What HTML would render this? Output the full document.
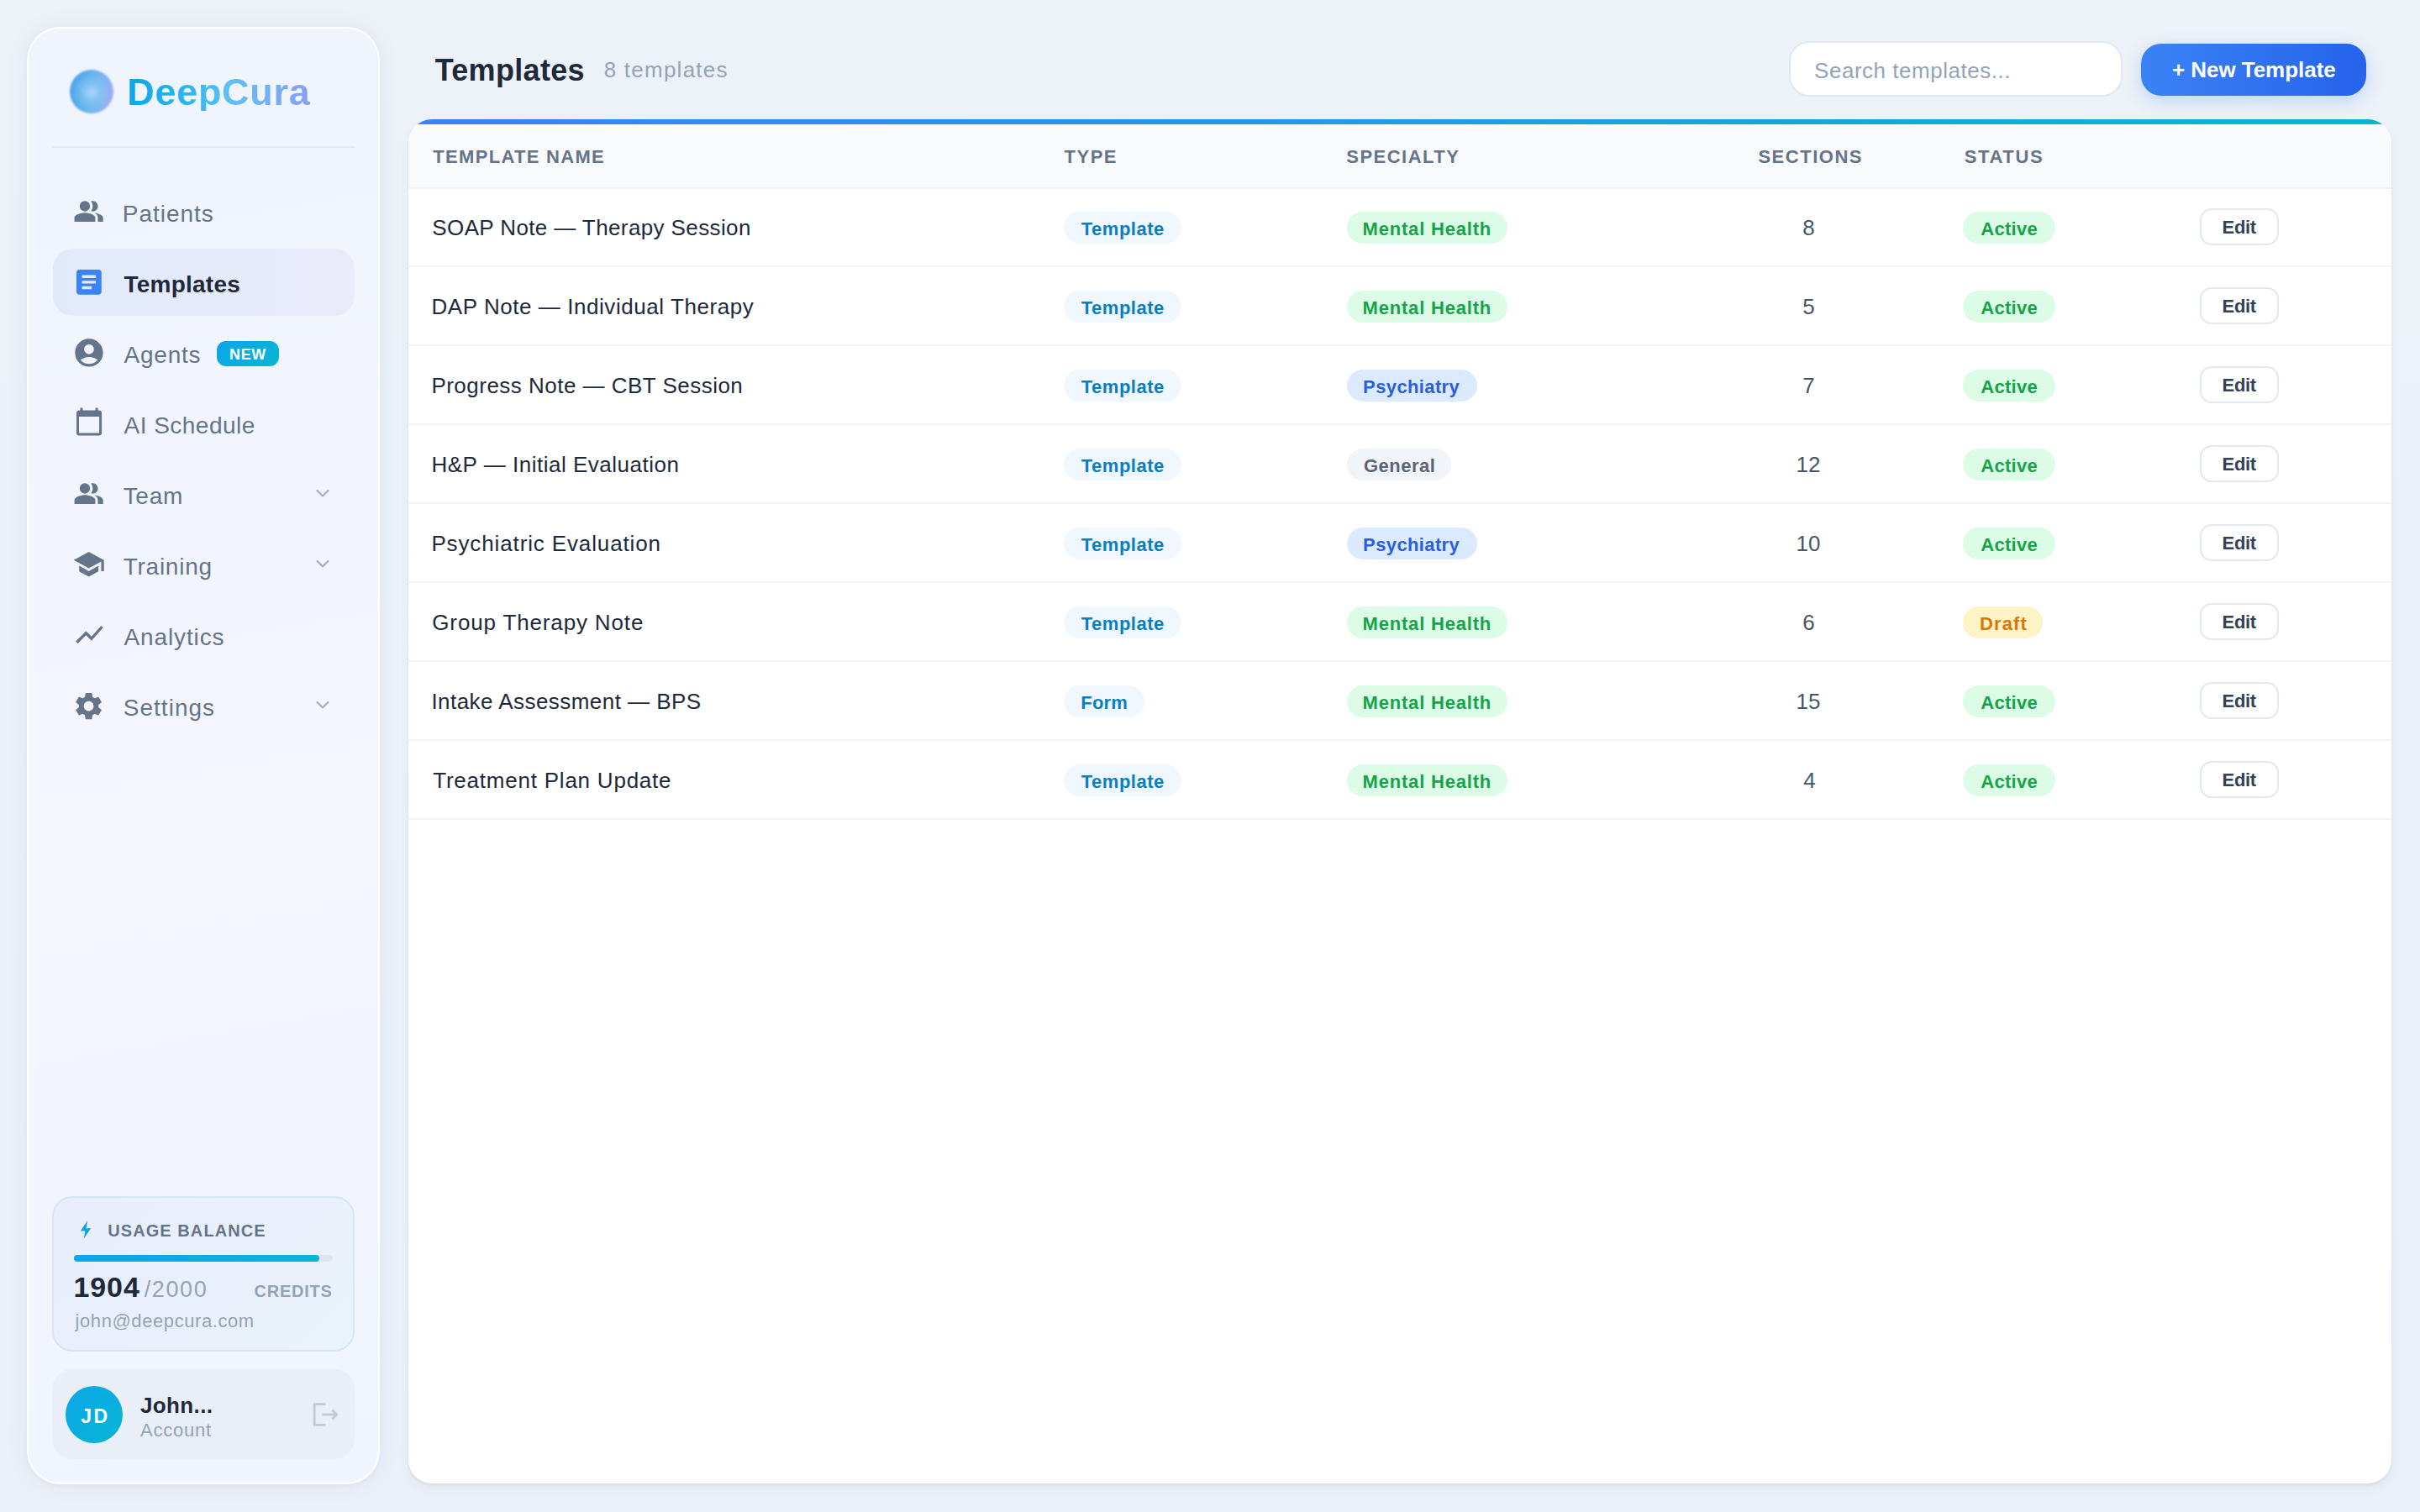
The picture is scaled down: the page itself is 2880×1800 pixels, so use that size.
<!DOCTYPE html>
<html><head><meta charset="utf-8"><title>Templates</title><style>
html,body{margin:0;padding:0}
@media (max-width:1500px){html{zoom:0.5}}
body{width:2880px;height:1800px;overflow:hidden;position:relative;background:linear-gradient(180deg,#edf1f8 0%,#ebeff8 100%);font-family:"Liberation Sans",sans-serif}
.t{position:absolute;white-space:nowrap;line-height:1;font-family:"Liberation Sans",sans-serif}
.abs{position:absolute}
.ic{position:absolute;overflow:visible}
#sb{position:absolute;left:32px;top:32px;width:420px;height:1735px;box-sizing:border-box;border-radius:40px;background:linear-gradient(170deg,#eff4fd 0%,#f2f5fe 30%,#f5f5fe 55%,#f0f5fd 100%);border:2px solid rgba(255,255,255,0.95);box-shadow:0 0 30px rgba(30,41,80,0.05),0 2px 6px rgba(30,41,80,0.03)}
#orb{position:absolute;left:83px;top:82.5px;width:52px;height:52px;border-radius:50%;background:radial-gradient(circle at 50% 52%,rgba(175,215,250,0.95) 0%,rgba(140,200,245,0.6) 30%,rgba(120,190,240,0) 62%),linear-gradient(100deg,#4aa3e6 0%,#62b2ee 45%,#86b4f2 75%,#a8a6f6 100%);filter:blur(1.3px)}
#act{left:62.5px;top:296px;width:359.5px;height:80px;border-radius:24px;background:linear-gradient(90deg,#e1eafb 0%,#e5eafb 50%,#eaebfb 100%)}
#usage{left:62px;top:1424px;width:360px;height:185px;box-sizing:border-box;border-radius:24px;border:2px solid #d5e6f6;background:linear-gradient(135deg,#e8eefb 0%,#eaf2fb 100%)}
#user{left:62px;top:1630px;width:360px;height:107px;border-radius:24px;background:#e9eef7}
#search{left:2129px;top:48.7px;width:397.4px;height:66.2px;box-sizing:border-box;border-radius:24px;border:2px solid #e2e8f0;background:#fff}
#newbtn{left:2548px;top:52px;width:268px;height:62px;border-radius:24px;background:linear-gradient(90deg,#3b82f6,#2563eb);box-shadow:0 6px 20px rgba(59,130,246,0.25)}
#card{left:486px;top:142px;width:2360px;height:1624px;border-radius:28px;background:#fff;overflow:hidden;box-shadow:0 2px 3px rgba(15,23,42,0.07),0 6px 16px rgba(15,23,42,0.04)}
#bar{position:absolute;left:0;top:0;width:100%;height:6px;background:linear-gradient(90deg,#3b82f6,#06b6d4)}
#thead{position:absolute;left:0;top:6px;width:100%;height:75px;background:#f8fafc;border-bottom:2px solid #f0f3f7}
.edit{width:93.5px;height:43.8px;box-sizing:border-box;border-radius:14px;border:2px solid #e2e8f0;background:#fff}
</style></head><body>
<div id="sb"></div>
<div id="orb"></div>
<div class="t" id="t0" style="left:151.30px;top:87.00px;font-size:45px;font-weight:700;color:#0ea5e9;letter-spacing:0.693px;background:linear-gradient(90deg,#0ea5e9 0%,#2fb5f5 35%,#5ec0f5 55%,#6fb4f6 72%,#8a9ff5 100%);-webkit-background-clip:text;background-clip:text;color:transparent;">DeepCura</div>
<div class="abs" style="left:62px;top:174px;width:360px;height:2px;background:#e3e8f0"></div>
<div class="abs" id="act"></div>
<svg class="ic" style="left:87.35px;top:232.50px;width:37.27px;height:37.27px;" viewBox="0 0 24 24"><g fill="#64748b"><path d="M16.67 13.13C18.04 14.06 19 15.32 19 17v3h4v-3c0-2.18-3.57-3.47-6.33-3.87z"/><circle cx="9" cy="8" r="4"/><path d="M15 12c2.21 0 4-1.79 4-4s-1.79-4-4-4c-.47 0-.91.1-1.33.24C14.5 5.27 15 6.58 15 8s-.5 2.73-1.33 3.76c.42.14.86.24 1.33.24z"/><path d="M9 13c-2.67 0-8 1.34-8 4v3h16v-3c0-2.66-5.33-4-8-4z"/></g></svg>
<svg class="ic" style="left:86.03px;top:315.80px;width:39.74px;height:39.74px;" viewBox="0 0 24 24"><g fill="#3b82f6"><path d="M19 3H5c-1.1 0-2 .9-2 2v14c0 1.1.9 2 2 2h14c1.1 0 2-.9 2-2V5c0-1.1-.9-2-2-2zm-5 14H7v-2h7v2zm3-4H7v-2h10v2zm0-4H7V7h10v2z"/></g></svg>
<svg class="ic" style="left:86.07px;top:400.00px;width:39.96px;height:39.96px;" viewBox="0 0 24 24"><g fill="#64748b"><path d="M12 2C6.48 2 2 6.48 2 12s4.48 10 10 10 10-4.48 10-10S17.52 2 12 2zm0 4c1.93 0 3.5 1.57 3.5 3.5S13.93 13 12 13s-3.5-1.57-3.5-3.5S10.07 6 12 6zm0 14c-2.03 0-4.43-.82-6.14-2.88C7.55 15.8 9.68 15 12 15s4.45.8 6.14 2.12C16.43 19.18 14.03 20 12 20z"/></g></svg>
<svg class="ic" style="left:88.09px;top:484.20px;width:36.12px;height:36.12px;" viewBox="0 0 24 24"><g fill="#64748b"><path d="M20 3h-1V1h-2v2H7V1H5v2H4c-1.1 0-2 .9-2 2v16c0 1.1.9 2 2 2h16c1.1 0 2-.9 2-2V5c0-1.1-.9-2-2-2zm0 18H4V8h16v13z"/></g></svg>
<svg class="ic" style="left:87.35px;top:568.80px;width:37.27px;height:37.27px;" viewBox="0 0 24 24"><g fill="#64748b"><path d="M16.67 13.13C18.04 14.06 19 15.32 19 17v3h4v-3c0-2.18-3.57-3.47-6.33-3.87z"/><circle cx="9" cy="8" r="4"/><path d="M15 12c2.21 0 4-1.79 4-4s-1.79-4-4-4c-.47 0-.91.1-1.33.24C14.5 5.27 15 6.58 15 8s-.5 2.73-1.33 3.76c.42.14.86.24 1.33.24z"/><path d="M9 13c-2.67 0-8 1.34-8 4v3h16v-3c0-2.66-5.33-4-8-4z"/></g></svg>
<svg class="ic" style="left:86.46px;top:651.95px;width:39.36px;height:39.36px;" viewBox="0 0 24 24"><g fill="#64748b"><path d="M5 13.18v4L12 21l7-3.82v-4L12 17l-7-3.82zM12 3L1 9l11 6 9-4.91V17h2V9L12 3z"/></g></svg>
<svg class="ic" style="left:86.56px;top:736.40px;width:38.88px;height:38.88px;" viewBox="0 0 24 24"><g fill="#64748b"><path d="M3.5 18.49l6-6.01 4 4L22 6.92l-1.41-1.41-7.09 7.97-4-4L2 16.99z"/></g></svg>
<svg class="ic" style="left:86.20px;top:820.80px;width:39.12px;height:39.12px;" viewBox="0 0 24 24"><g fill="#64748b"><path d="M19.14 12.94c.04-.3.06-.61.06-.94 0-.32-.02-.64-.07-.94l2.03-1.58c.18-.14.23-.41.12-.61l-1.92-3.32c-.12-.22-.37-.29-.59-.22l-2.39.96c-.5-.38-1.03-.7-1.62-.94l-.36-2.54c-.04-.24-.24-.41-.48-.41h-3.84c-.24 0-.43.17-.47.41l-.36 2.54c-.59.24-1.13.57-1.62.94l-2.39-.96c-.22-.08-.47 0-.59.22L2.74 8.87c-.12.21-.08.47.12.61l2.03 1.58c-.05.3-.09.63-.09.94s.02.64.07.94l-2.03 1.58c-.18.14-.23.41-.12.61l1.92 3.32c.12.22.37.29.59.22l2.39-.96c.5.38 1.03.7 1.62.94l.36 2.54c.05.24.24.41.48.41h3.84c.24 0 .44-.17.47-.41l.36-2.54c.59-.24 1.13-.56 1.62-.94l2.39.96c.22.08.47 0 .59-.22l1.92-3.32c.12-.22.07-.47-.12-.61l-2.01-1.58zM12 15.6c-1.98 0-3.6-1.62-3.6-3.6s1.62-3.6 3.6-3.6 3.6 1.62 3.6 3.6-1.62 3.6-3.6 3.6z"/></g></svg>
<div class="t" id="t1" style="left:145.78px;top:240.60px;font-size:28px;font-weight:400;color:#64748b;letter-spacing:0.989px;">Patients</div>
<div class="t" id="t2" style="left:147.58px;top:324.80px;font-size:28px;font-weight:700;color:#1e293b;letter-spacing:0.220px;">Templates</div>
<div class="t" id="t3" style="left:147.58px;top:408.90px;font-size:28px;font-weight:400;color:#64748b;letter-spacing:0.750px;">Agents</div>
<div class="t" id="t4" style="left:147.58px;top:493.00px;font-size:28px;font-weight:400;color:#64748b;letter-spacing:0.469px;">AI Schedule</div>
<div class="t" id="t5" style="left:146.68px;top:576.80px;font-size:28px;font-weight:400;color:#64748b;letter-spacing:0.697px;">Team</div>
<div class="t" id="t6" style="left:146.68px;top:661.20px;font-size:28px;font-weight:400;color:#64748b;letter-spacing:0.754px;">Training</div>
<div class="t" id="t7" style="left:147.58px;top:745.30px;font-size:28px;font-weight:400;color:#64748b;letter-spacing:0.869px;">Analytics</div>
<div class="t" id="t8" style="left:146.68px;top:828.70px;font-size:28px;font-weight:400;color:#64748b;letter-spacing:1.040px;">Settings</div>
<div class="abs" style="left:257.6px;top:405.7px;width:74px;height:30.2px;border-radius:11px;background:linear-gradient(135deg,#0ea5e9,#06b6d4)"></div>
<div class="t" id="t9" style="left:273.05px;top:413.00px;font-size:18px;font-weight:700;color:#ffffff;letter-spacing:0.605px;">NEW</div>
<svg class="ic" style="left:370px;top:576.2px;width:28px;height:24px" viewBox="0 0 28 24"><polyline points="7.5,8 14,14.3 20.5,8" fill="none" stroke="#a9b2bf" stroke-width="2.3" stroke-linecap="round" stroke-linejoin="round"/></svg>
<svg class="ic" style="left:370px;top:660.1px;width:28px;height:24px" viewBox="0 0 28 24"><polyline points="7.5,8 14,14.3 20.5,8" fill="none" stroke="#a9b2bf" stroke-width="2.3" stroke-linecap="round" stroke-linejoin="round"/></svg>
<svg class="ic" style="left:370px;top:828.1px;width:28px;height:24px" viewBox="0 0 28 24"><polyline points="7.5,8 14,14.3 20.5,8" fill="none" stroke="#a9b2bf" stroke-width="2.3" stroke-linecap="round" stroke-linejoin="round"/></svg>
<div class="abs" id="usage"></div>
<svg class="ic" style="left:92px;top:1451px;width:20px;height:26px" viewBox="0 0 20 26"><path d="M12.2 2 L3.8 14.4 H9.4 L7.6 23.8 L16.2 11.2 H10.6 Z" fill="#0ea5e9"/></svg>
<div class="t" id="t10" style="left:128.31px;top:1455.00px;font-size:20px;font-weight:700;color:#64748b;letter-spacing:1.064px;">USAGE BALANCE</div>
<div class="abs" style="left:87.7px;top:1494px;width:308.6px;height:8px;border-radius:4px;background:#dfe5ec"></div>
<div class="abs" style="left:87.7px;top:1494px;width:292.1px;height:8px;border-radius:4px;background:linear-gradient(90deg,#0ea5e9,#06b6d4)"></div>
<div class="t" id="t11" style="left:87.41px;top:1515.30px;font-size:34px;font-weight:700;color:#1e293b;letter-spacing:0.943px;">1904</div>
<div class="t" id="t12" style="left:171.79px;top:1522.30px;font-size:27px;font-weight:400;color:#94a3b8;letter-spacing:1.575px;">/2000</div>
<div class="t" id="t13" style="left:302.52px;top:1527.30px;font-size:20px;font-weight:700;color:#94a3b8;letter-spacing:0.745px;">CREDITS</div>
<div class="t" id="t14" style="left:89.55px;top:1562.00px;font-size:22px;font-weight:400;color:#94a3b8;letter-spacing:0.579px;">john@deepcura.com</div>
<div class="abs" id="user"></div>
<div class="abs" style="left:78px;top:1650px;width:68px;height:68px;border-radius:50%;background:linear-gradient(135deg,#0ea5e9,#06b6d4)"></div>
<div class="t" id="t15" style="left:96.26px;top:1674.80px;font-size:23px;font-weight:700;color:#ffffff;letter-spacing:2.450px;">JD</div>
<div class="t" id="t16" style="left:167.00px;top:1660.00px;font-size:26px;font-weight:700;color:#1e293b;letter-spacing:0.377px;">John...</div>
<div class="t" id="t17" style="left:167.00px;top:1692.30px;font-size:22px;font-weight:400;color:#94a3b8;letter-spacing:0.750px;">Account</div>
<svg class="ic" style="left:366px;top:1662px;width:44px;height:44px" viewBox="0 0 44 44"><g fill="none" stroke="#c3cad5" stroke-width="2.8" stroke-linecap="butt" stroke-linejoin="round"><polyline points="21.5,9.6 8.2,9.6 8.2,34.4 21.5,34.4"/><line x1="17.5" y1="22" x2="34.5" y2="22"/><polyline points="29.2,16.4 34.8,22 29.2,27.6"/></g></svg>
<div class="t" id="t18" style="left:517.63px;top:66.30px;font-size:36px;font-weight:700;color:#1e293b;letter-spacing:0.326px;">Templates</div>
<div class="t" id="t19" style="left:718.73px;top:70.10px;font-size:26px;font-weight:400;color:#94a3b8;letter-spacing:1.235px;">8 templates</div>
<div class="abs" id="search"></div>
<div class="t" id="t20" style="left:2159.10px;top:70.70px;font-size:26px;font-weight:400;color:#94a3b8;letter-spacing:0.518px;">Search templates...</div>
<div class="abs" id="newbtn"></div>
<div class="t" id="t21" style="left:2584.89px;top:70.30px;font-size:26px;font-weight:700;color:#ffffff;letter-spacing:-0.035px;">+ New Template</div>
<div class="abs" id="card"><div id="bar"></div><div id="thead"></div></div>
<div class="t" id="t22" style="left:515.37px;top:176.00px;font-size:22px;font-weight:700;color:#64748b;letter-spacing:1.302px;">TEMPLATE NAME</div>
<div class="t" id="t23" style="left:1266.58px;top:176.00px;font-size:22px;font-weight:700;color:#64748b;letter-spacing:1.483px;">TYPE</div>
<div class="t" id="t24" style="left:1602.26px;top:176.00px;font-size:22px;font-weight:700;color:#64748b;letter-spacing:1.486px;">SPECIALTY</div>
<div class="t" id="t25" style="left:2092.42px;top:176.00px;font-size:22px;font-weight:700;color:#64748b;letter-spacing:1.516px;">SECTIONS</div>
<div class="t" id="t26" style="left:2337.63px;top:176.00px;font-size:22px;font-weight:700;color:#64748b;letter-spacing:1.650px;">STATUS</div>
<div class="abs" style="left:486px;top:316px;width:2360px;height:2px;background:#f0f3f7"></div>
<div class="t" id="t27" style="left:514.31px;top:258.00px;font-size:26px;font-weight:400;color:#1e293b;letter-spacing:0.389px;">SOAP Note — Therapy Session</div>
<div class="abs" style="left:1266.2px;top:251.8px;width:139.4px;height:38px;border-radius:19px;background:#f0f7fe"></div><div class="t" id="t28" style="left:1286.79px;top:262.00px;font-size:22px;font-weight:700;color:#0a7fc0;letter-spacing:0.511px;">Template</div>
<div class="abs" style="left:1602.5px;top:251.8px;width:191.2px;height:38px;border-radius:19px;background:#dcfce7"></div><div class="t" id="t29" style="left:1621.57px;top:262.00px;font-size:22px;font-weight:700;color:#16a34a;letter-spacing:0.808px;">Mental Health</div>
<div class="t" id="t30" style="left:2145.34px;top:258.00px;font-size:26px;font-weight:400;color:#475569;letter-spacing:0.000px;">8</div>
<div class="abs" style="left:2335.9px;top:251.8px;width:110.2px;height:38px;border-radius:19px;background:#dcfce7"></div><div class="t" id="t31" style="left:2357.26px;top:262.00px;font-size:22px;font-weight:700;color:#16a34a;letter-spacing:0.296px;">Active</div>
<div class="abs edit" style="left:2618.2px;top:248px"></div>
<div class="t" id="t32" style="left:2644.52px;top:260.00px;font-size:22px;font-weight:700;color:#334155;letter-spacing:-0.303px;">Edit</div>
<div class="abs" style="left:486px;top:410px;width:2360px;height:2px;background:#f0f3f7"></div>
<div class="t" id="t33" style="left:513.41px;top:352.00px;font-size:26px;font-weight:400;color:#1e293b;letter-spacing:0.564px;">DAP Note — Individual Therapy</div>
<div class="abs" style="left:1266.2px;top:345.8px;width:139.4px;height:38px;border-radius:19px;background:#f0f7fe"></div><div class="t" id="t34" style="left:1286.79px;top:356.00px;font-size:22px;font-weight:700;color:#0a7fc0;letter-spacing:0.511px;">Template</div>
<div class="abs" style="left:1602.5px;top:345.8px;width:191.2px;height:38px;border-radius:19px;background:#dcfce7"></div><div class="t" id="t35" style="left:1621.57px;top:356.00px;font-size:22px;font-weight:700;color:#16a34a;letter-spacing:0.808px;">Mental Health</div>
<div class="t" id="t36" style="left:2145.34px;top:352.00px;font-size:26px;font-weight:400;color:#475569;letter-spacing:0.000px;">5</div>
<div class="abs" style="left:2335.9px;top:345.8px;width:110.2px;height:38px;border-radius:19px;background:#dcfce7"></div><div class="t" id="t37" style="left:2357.26px;top:356.00px;font-size:22px;font-weight:700;color:#16a34a;letter-spacing:0.296px;">Active</div>
<div class="abs edit" style="left:2618.2px;top:342px"></div>
<div class="t" id="t38" style="left:2644.52px;top:354.00px;font-size:22px;font-weight:700;color:#334155;letter-spacing:-0.303px;">Edit</div>
<div class="abs" style="left:486px;top:504px;width:2360px;height:2px;background:#f0f3f7"></div>
<div class="t" id="t39" style="left:513.41px;top:446.00px;font-size:26px;font-weight:400;color:#1e293b;letter-spacing:0.482px;">Progress Note — CBT Session</div>
<div class="abs" style="left:1266.2px;top:439.8px;width:139.4px;height:38px;border-radius:19px;background:#f0f7fe"></div><div class="t" id="t40" style="left:1286.79px;top:450.00px;font-size:22px;font-weight:700;color:#0a7fc0;letter-spacing:0.511px;">Template</div>
<div class="abs" style="left:1602.5px;top:439.8px;width:155.2px;height:38px;border-radius:19px;background:#dbeafe"></div><div class="t" id="t41" style="left:1622.12px;top:450.00px;font-size:22px;font-weight:700;color:#2b60d9;letter-spacing:0.377px;">Psychiatry</div>
<div class="t" id="t42" style="left:2145.34px;top:446.00px;font-size:26px;font-weight:400;color:#475569;letter-spacing:0.000px;">7</div>
<div class="abs" style="left:2335.9px;top:439.8px;width:110.2px;height:38px;border-radius:19px;background:#dcfce7"></div><div class="t" id="t43" style="left:2357.26px;top:450.00px;font-size:22px;font-weight:700;color:#16a34a;letter-spacing:0.296px;">Active</div>
<div class="abs edit" style="left:2618.2px;top:436px"></div>
<div class="t" id="t44" style="left:2644.52px;top:448.00px;font-size:22px;font-weight:700;color:#334155;letter-spacing:-0.303px;">Edit</div>
<div class="abs" style="left:486px;top:598px;width:2360px;height:2px;background:#f0f3f7"></div>
<div class="t" id="t45" style="left:513.41px;top:540.00px;font-size:26px;font-weight:400;color:#1e293b;letter-spacing:0.513px;">H&amp;P — Initial Evaluation</div>
<div class="abs" style="left:1266.2px;top:533.8px;width:139.4px;height:38px;border-radius:19px;background:#f0f7fe"></div><div class="t" id="t46" style="left:1286.79px;top:544.00px;font-size:22px;font-weight:700;color:#0a7fc0;letter-spacing:0.511px;">Template</div>
<div class="abs" style="left:1602.5px;top:533.8px;width:124.5px;height:38px;border-radius:19px;background:#f1f5f9"></div><div class="t" id="t47" style="left:1623.03px;top:544.00px;font-size:22px;font-weight:700;color:#5b6476;letter-spacing:0.483px;">General</div>
<div class="t" id="t48" style="left:2137.60px;top:540.00px;font-size:26px;font-weight:400;color:#475569;letter-spacing:0.000px;">12</div>
<div class="abs" style="left:2335.9px;top:533.8px;width:110.2px;height:38px;border-radius:19px;background:#dcfce7"></div><div class="t" id="t49" style="left:2357.26px;top:544.00px;font-size:22px;font-weight:700;color:#16a34a;letter-spacing:0.296px;">Active</div>
<div class="abs edit" style="left:2618.2px;top:530px"></div>
<div class="t" id="t50" style="left:2644.52px;top:542.00px;font-size:22px;font-weight:700;color:#334155;letter-spacing:-0.303px;">Edit</div>
<div class="abs" style="left:486px;top:692px;width:2360px;height:2px;background:#f0f3f7"></div>
<div class="t" id="t51" style="left:513.41px;top:634.00px;font-size:26px;font-weight:400;color:#1e293b;letter-spacing:0.871px;">Psychiatric Evaluation</div>
<div class="abs" style="left:1266.2px;top:627.8px;width:139.4px;height:38px;border-radius:19px;background:#f0f7fe"></div><div class="t" id="t52" style="left:1286.79px;top:638.00px;font-size:22px;font-weight:700;color:#0a7fc0;letter-spacing:0.511px;">Template</div>
<div class="abs" style="left:1602.5px;top:627.8px;width:155.2px;height:38px;border-radius:19px;background:#dbeafe"></div><div class="t" id="t53" style="left:1622.12px;top:638.00px;font-size:22px;font-weight:700;color:#2b60d9;letter-spacing:0.377px;">Psychiatry</div>
<div class="t" id="t54" style="left:2137.60px;top:634.00px;font-size:26px;font-weight:400;color:#475569;letter-spacing:0.000px;">10</div>
<div class="abs" style="left:2335.9px;top:627.8px;width:110.2px;height:38px;border-radius:19px;background:#dcfce7"></div><div class="t" id="t55" style="left:2357.26px;top:638.00px;font-size:22px;font-weight:700;color:#16a34a;letter-spacing:0.296px;">Active</div>
<div class="abs edit" style="left:2618.2px;top:624px"></div>
<div class="t" id="t56" style="left:2644.52px;top:636.00px;font-size:22px;font-weight:700;color:#334155;letter-spacing:-0.303px;">Edit</div>
<div class="abs" style="left:486px;top:786px;width:2360px;height:2px;background:#f0f3f7"></div>
<div class="t" id="t57" style="left:514.31px;top:728.00px;font-size:26px;font-weight:400;color:#1e293b;letter-spacing:0.854px;">Group Therapy Note</div>
<div class="abs" style="left:1266.2px;top:721.8px;width:139.4px;height:38px;border-radius:19px;background:#f0f7fe"></div><div class="t" id="t58" style="left:1286.79px;top:732.00px;font-size:22px;font-weight:700;color:#0a7fc0;letter-spacing:0.511px;">Template</div>
<div class="abs" style="left:1602.5px;top:721.8px;width:191.2px;height:38px;border-radius:19px;background:#dcfce7"></div><div class="t" id="t59" style="left:1621.57px;top:732.00px;font-size:22px;font-weight:700;color:#16a34a;letter-spacing:0.808px;">Mental Health</div>
<div class="t" id="t60" style="left:2145.34px;top:728.00px;font-size:26px;font-weight:400;color:#475569;letter-spacing:0.000px;">6</div>
<div class="abs" style="left:2335.9px;top:721.8px;width:95.2px;height:38px;border-radius:19px;background:#fef3c7"></div><div class="t" id="t61" style="left:2355.96px;top:732.00px;font-size:22px;font-weight:700;color:#d97706;letter-spacing:1.138px;">Draft</div>
<div class="abs edit" style="left:2618.2px;top:718px"></div>
<div class="t" id="t62" style="left:2644.52px;top:730.00px;font-size:22px;font-weight:700;color:#334155;letter-spacing:-0.303px;">Edit</div>
<div class="abs" style="left:486px;top:880px;width:2360px;height:2px;background:#f0f3f7"></div>
<div class="t" id="t63" style="left:513.41px;top:822.00px;font-size:26px;font-weight:400;color:#1e293b;letter-spacing:0.455px;">Intake Assessment — BPS</div>
<div class="abs" style="left:1266.2px;top:815.8px;width:95.4px;height:38px;border-radius:19px;background:#f0f7fe"></div><div class="t" id="t64" style="left:1286.28px;top:826.00px;font-size:22px;font-weight:700;color:#0a7fc0;letter-spacing:0.197px;">Form</div>
<div class="abs" style="left:1602.5px;top:815.8px;width:191.2px;height:38px;border-radius:19px;background:#dcfce7"></div><div class="t" id="t65" style="left:1621.57px;top:826.00px;font-size:22px;font-weight:700;color:#16a34a;letter-spacing:0.808px;">Mental Health</div>
<div class="t" id="t66" style="left:2137.60px;top:822.00px;font-size:26px;font-weight:400;color:#475569;letter-spacing:0.000px;">15</div>
<div class="abs" style="left:2335.9px;top:815.8px;width:110.2px;height:38px;border-radius:19px;background:#dcfce7"></div><div class="t" id="t67" style="left:2357.26px;top:826.00px;font-size:22px;font-weight:700;color:#16a34a;letter-spacing:0.296px;">Active</div>
<div class="abs edit" style="left:2618.2px;top:812px"></div>
<div class="t" id="t68" style="left:2644.52px;top:824.00px;font-size:22px;font-weight:700;color:#334155;letter-spacing:-0.303px;">Edit</div>
<div class="abs" style="left:486px;top:974px;width:2360px;height:2px;background:#f0f3f7"></div>
<div class="t" id="t69" style="left:515.21px;top:916.00px;font-size:26px;font-weight:400;color:#1e293b;letter-spacing:0.776px;">Treatment Plan Update</div>
<div class="abs" style="left:1266.2px;top:909.8px;width:139.4px;height:38px;border-radius:19px;background:#f0f7fe"></div><div class="t" id="t70" style="left:1286.79px;top:920.00px;font-size:22px;font-weight:700;color:#0a7fc0;letter-spacing:0.511px;">Template</div>
<div class="abs" style="left:1602.5px;top:909.8px;width:191.2px;height:38px;border-radius:19px;background:#dcfce7"></div><div class="t" id="t71" style="left:1621.57px;top:920.00px;font-size:22px;font-weight:700;color:#16a34a;letter-spacing:0.808px;">Mental Health</div>
<div class="t" id="t72" style="left:2146.24px;top:916.00px;font-size:26px;font-weight:400;color:#475569;letter-spacing:0.000px;">4</div>
<div class="abs" style="left:2335.9px;top:909.8px;width:110.2px;height:38px;border-radius:19px;background:#dcfce7"></div><div class="t" id="t73" style="left:2357.26px;top:920.00px;font-size:22px;font-weight:700;color:#16a34a;letter-spacing:0.296px;">Active</div>
<div class="abs edit" style="left:2618.2px;top:906px"></div>
<div class="t" id="t74" style="left:2644.52px;top:918.00px;font-size:22px;font-weight:700;color:#334155;letter-spacing:-0.303px;">Edit</div>
</body></html>
